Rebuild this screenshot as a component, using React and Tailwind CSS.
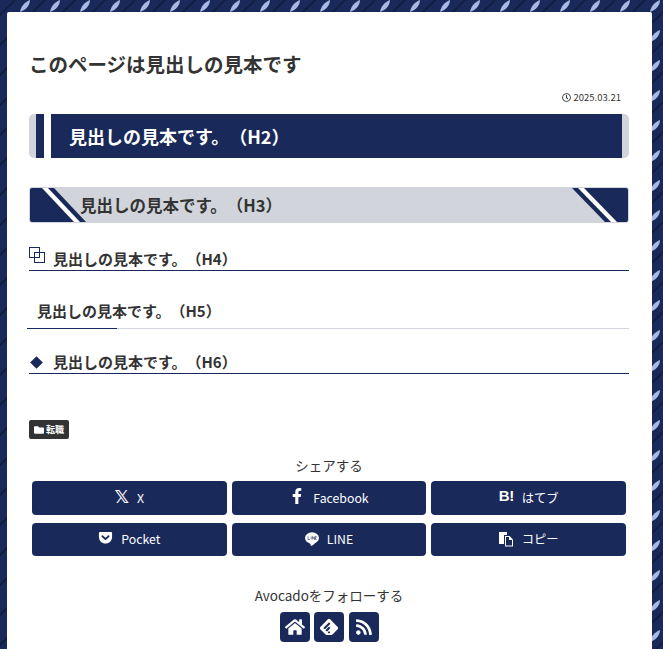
import React from "react";
import { FaHome, FaRss, FaFacebookF, FaGetPocket, FaFolder, FaRegClock } from "react-icons/fa";
import { SiFeedly } from "react-icons/si";

const font = { fontFamily: '"Noto Sans CJK JP","Noto Sans",sans-serif' };
const H = "見出しの見本です。";

function Bg() {
  return (
    <svg className="fixed inset-0 -z-10" width="663" height="649">
      <defs>
        <pattern id="p" width="30" height="30" patternUnits="userSpaceOnUse">
          <rect width="30" height="30" fill="#19295a" />
          <path d="M-5 20L20 -5M10 35L35 10" stroke="#111b3c" strokeWidth="1.6" />
          <path d="M20 12C21 6 25 2 30 0C30 5 26 10 20 12Z" fill="#a9b9e4" />
        </pattern>
      </defs>
      <rect width="663" height="649" fill="url(#p)" />
    </svg>
  );
}

function Btn({ icon, label }) {
  return (
    <div className="h-[33.5px] rounded bg-[#19295a] text-white flex items-center justify-center gap-2 text-[12.3px]">
      <span className="flex items-center justify-center">{icon}</span>
      <span>{label}</span>
    </div>
  );
}

function Copy() {
  return (
    <svg width="15" height="15" viewBox="0 0 15 15">
      <path d="M0 0H8V3H5V12H0Z" fill="#fff" />
      <path d="M6 4H10.5L14 7.500V14.500H6Z" fill="#fff" />
      <path d="M7 5H10V8H13V13.500H7Z" fill="#19295a" />
    </svg>
  );
}

function LineBubble() {
  return (
    <svg width="14" height="14" viewBox="0 0 14 14">
      <ellipse cx="7" cy="6" rx="7" ry="5.800" fill="#fff" />
      <path d="M5 11L6 14C7.500 13.500 9.500 12 10.500 10.500Z" fill="#fff" />
      <path d="M3 4.500V7.500H5M6.200 4.500V7.500M7.600 7.500V4.500L9.400 7.500V4.500M11.500 4.500H10.400V7.500H11.500M10.400 6H11.500" fill="none" stroke="#19295a" strokeWidth="0.6" />
    </svg>
  );
}

export default function App() {
  return (
    <div style={font} className="h-[649px] overflow-hidden px-[7px] pt-3 text-[#333] [text-spacing-trim:space-all]">
      <Bg />
      <main className="bg-white rounded-t-[2px] h-[700px] w-[645px] pl-[22px] pr-[23px] pt-[36px]">
        <h1 className="text-[19.500px] leading-[32px] font-bold">このページは見出しの見本です</h1>
        <div className="flex justify-end items-center gap-[3px] text-[9.500px] leading-[14px] mt-[10px] pr-[8px]">
          <FaRegClock className="text-[9px]" />
          <span>2025.03.21</span>
        </div>
        <h2 className="mt-[10px] h-11 rounded-[5px] bg-[#d1d5db] flex px-[7px] overflow-hidden">
          <div className="w-2 bg-[#19295a]" />
          <div className="w-[7px] bg-white" />
          <div className="flex-1 bg-[#19295a] text-white font-bold text-[18px] flex items-center pl-[18px]">{H}（H2）</div>
        </h2>
        <h3 className="relative mt-[29px] h-9 rounded-[3px] bg-[#d1d5db] overflow-hidden flex items-center pl-[50px] text-[16.500px] font-bold border border-[#d1d5db]">
          <svg className="absolute left-0 top-0" width="60" height="34" viewBox="0 0 60 34">
            <path d="M0 0H24L56 34H0Z" fill="#19295a" />
            <path d="M12 0H18L50 34H44Z" fill="#fff" />
          </svg>
          <svg className="absolute right-0 top-0" width="60" height="34" viewBox="0 0 60 34">
            <path d="M60 0H4L37 34H60Z" fill="#19295a" />
            <path d="M10 0H16L49 34H43Z" fill="#fff" />
          </svg>
          <span className="relative">{H}（H3）</span>
        </h3>
        <h4 className="relative mt-[21px] h-[27px] border-b border-[#19295a] text-[15px] font-bold pl-6 flex items-end leading-[22px] pb-[0.5px]">
          <svg className="absolute left-0 top-[3px]" width="16" height="16" viewBox="0 0 16 16" fill="none" stroke="#19295a">
            <rect x="0.5" y="0.5" width="10" height="10" />
            <rect x="5.500" y="5.500" width="10" height="10" />
          </svg>
          {H}（H4）
        </h4>
        <h5 className="relative mt-[27px] h-[31px] border-b border-[#d1d5db] text-[15px] font-bold pl-2 leading-[26px]">
          {H}（H5）
          <div className="absolute left-[-2px] bottom-[-1px] w-[90px] h-px bg-[#19295a]" />
        </h5>
        <h6 className="relative mt-[19px] h-[26px] border-b border-[#19295a] text-[15px] font-bold pl-6 leading-[27px]">
          <span className="absolute left-[3px] top-[10px] w-[9px] h-[9px] rotate-45 bg-[#19295a]" />
          {H}（H6）
        </h6>
        <div className="mt-[46px] w-10 h-[19px] rounded-[2px] bg-[#333] text-white text-[9px] font-bold flex items-center justify-center gap-[2px]">
          <FaFolder className="text-[10px]" />
          <span>転職</span>
        </div>
        <div className="mt-[16px] text-center text-[13.500px] leading-[20px]">シェアする</div>
        <div className="mt-[6px] px-[3px] grid grid-cols-3 gap-x-[5px] gap-y-2">
          <Btn icon={<span className="text-[18px] leading-none font-bold [font-family:'DejaVu_Sans'] relative top-[-1px]">𝕏</span>} label="X" />
          <Btn icon={<FaFacebookF className="text-[16px] relative top-[-2px]" />} label="Facebook" />
          <Btn icon={<span className="text-[15px] leading-none font-black [font-family:'Liberation_Sans'] tracking-[-0.5px] relative top-[-2px]">B!</span>} label="はてブ" />
          <Btn icon={<FaGetPocket className="text-[15px] relative top-[-2px]" />} label="Pocket" />
          <Btn icon={<LineBubble />} label="LINE" />
          <Btn icon={<Copy />} label="コピー" />
        </div>
        <div className="mt-[29px] text-center text-[13.500px] leading-[20px]">Avocadoをフォローする</div>
        <div className="mt-[7px] flex justify-center gap-[4.5px]">
          {[<FaHome className="text-[20px]" />, <SiFeedly className="text-[18px]" />, <FaRss className="text-[18px]" />].map((ic, i) => (
            <div key={i} className="w-[30px] h-[30px] rounded bg-[#19295a] text-white flex items-center justify-center">{ic}</div>
          ))}
        </div>
      </main>
    </div>
  );
}
